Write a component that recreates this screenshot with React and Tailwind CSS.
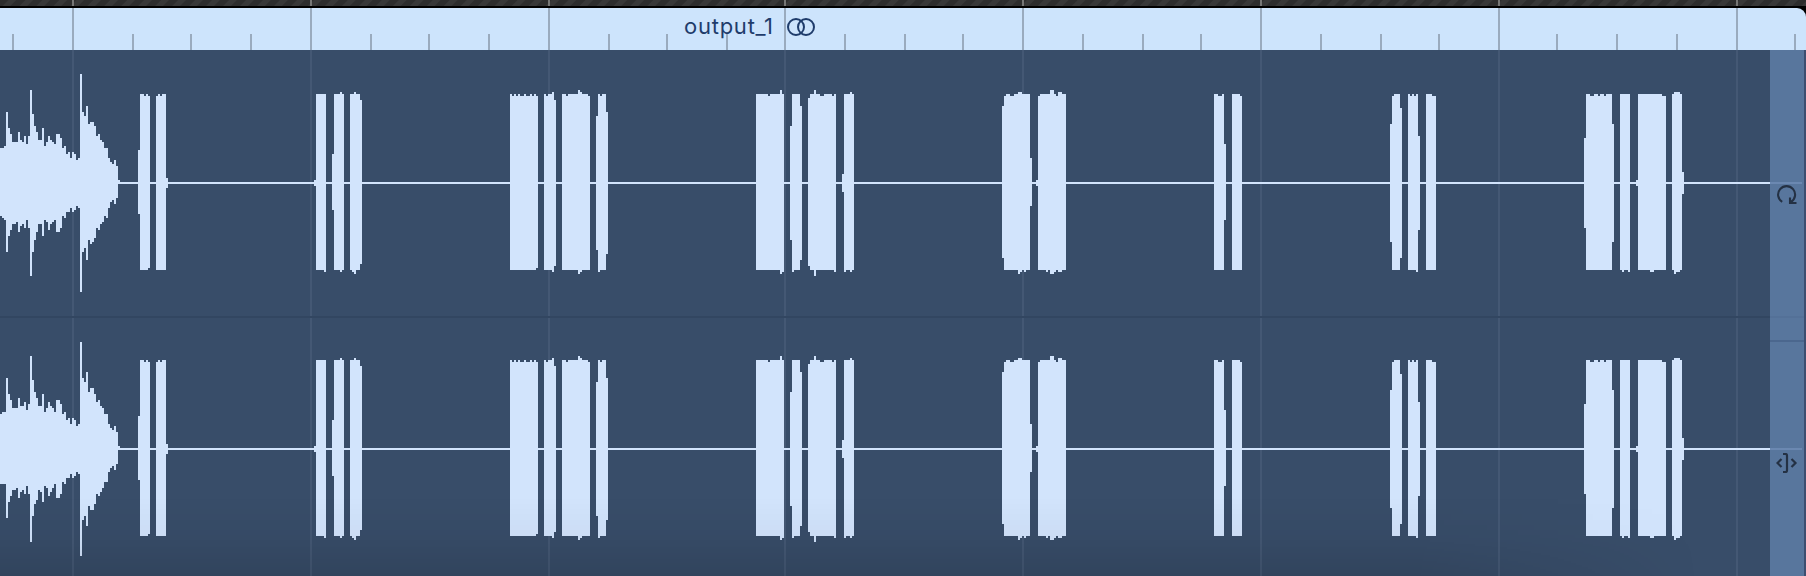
import React from 'react';

// All drawing data is expressed in 2px cells.
const NOISE_A_UP = [17,17,18,35,27,24,20,20,20,25,21,20,23,19,23,46,34,28,25,21,21,27,18,20,23,21,20,19,24,24,22,17,18,14,15,12,15,14,11,12,54,35,33,38,29,30,30,28,23,24,21,20,17,17,12,10,9,11,8,1];
const NOISE_A_DOWN = [17,18,19,35,27,24,21,21,20,25,22,21,23,19,23,47,35,29,25,21,21,27,19,20,24,21,20,19,25,25,23,17,18,15,15,13,15,14,12,13,55,35,33,39,29,31,30,28,23,24,21,20,17,18,13,10,9,11,8,1];
const NOISE_B_UP = [17,18,18,35,27,24,20,20,20,25,21,21,23,19,22,46,34,28,25,21,21,27,18,20,23,21,20,18,24,24,22,17,18,14,15,12,15,14,11,12,53,35,33,38,28,30,30,27,23,24,21,20,17,17,12,10,9,11,8,1];
const NOISE_B_DOWN = [18,18,18,35,27,24,21,21,20,25,22,21,23,19,23,47,34,28,26,21,22,27,19,20,24,22,20,18,25,25,23,17,18,15,15,13,15,14,12,13,54,36,34,39,29,31,31,28,23,24,22,20,17,17,12,10,9,11,8,1];

// [first cell, cell count, cells above centre, cells below centre]
const BURSTS = [
  [69,1,16,16],[70,2,44,44],[72,1,43,44],[73,1,44,44],[74,1,43,43],
  [78,1,43,44],[79,1,44,44],[80,1,43,44],[81,2,44,44],[83,1,2,3],
  [157,1,1,2],[158,4,44,44],[162,1,44,45],
  [166,1,14,14],[167,3,44,44],[170,1,45,45],[171,1,44,44],
  [175,1,44,44],[176,1,44,45],[177,1,45,46],[178,2,44,44],[180,1,41,41],
  [255,1,44,44],[256,1,43,44],[257,1,44,44],[258,1,43,44],[259,1,44,44],[260,2,43,44],[262,1,44,44],[263,2,43,44],[265,1,44,44],[266,1,43,44],[267,1,44,44],[268,1,43,43],
  [272,1,44,44],[273,1,43,44],[274,2,44,44],[276,1,45,45],[277,1,41,42],
  [281,2,44,44],[283,1,43,44],[284,5,44,44],[289,1,46,46],[290,1,45,45],[291,3,44,44],[294,1,43,44],
  [298,1,33,34],[299,1,44,45],[300,1,43,44],[301,2,44,44],[303,1,35,36],
  [378,6,44,44],[384,1,43,44],[385,5,44,44],[390,1,46,46],[391,1,44,45],
  [395,1,28,29],[396,1,44,45],[397,3,44,44],[400,1,38,39],
  [404,1,42,42],[405,2,44,44],[407,1,46,47],[408,2,44,44],[410,2,43,44],[412,4,44,44],[416,1,43,44],[417,1,44,45],
  [421,1,4,5],[422,1,44,45],[423,2,44,44],[425,1,45,45],[426,1,44,44],
  [501,1,38,38],[502,1,43,44],[503,2,44,44],[505,2,43,44],[507,2,44,44],[509,1,45,46],[510,1,45,45],[511,1,44,44],[512,1,44,45],[513,2,44,44],[515,1,12,12],
  [518,1,1,2],[519,1,43,44],[520,3,44,44],[523,1,44,45],[524,1,44,44],[525,2,46,46],[527,1,44,45],[528,1,43,44],[529,2,45,45],[531,2,44,44],
  [607,2,44,44],[609,2,43,44],[611,1,44,44],[612,1,19,19],[616,4,44,44],[620,1,43,44],
  [695,1,29,30],[696,1,43,44],[697,3,44,44],[700,1,37,38],
  [704,1,44,44],[705,1,43,44],[706,1,44,44],[707,1,43,44],[708,1,44,45],[709,1,23,24],
  [713,3,44,44],[716,2,43,44],
  [792,1,22,23],[793,2,44,44],[795,2,43,44],[797,2,44,44],[799,1,43,44],[800,2,44,44],[802,1,43,44],[803,3,44,44],[806,1,29,30],
  [810,1,44,44],[811,1,44,45],[812,2,44,44],[814,1,44,45],
  [818,1,1,2],[819,6,44,44],[825,2,44,45],[827,4,44,44],[831,2,43,44],
  [836,1,44,44],[837,1,45,46],[838,2,45,45],[840,1,44,44],[841,1,5,6],
];

const MAJOR = [36, 155, 274, 392, 511, 630, 749, 868];
const MINOR = [6, 66, 95, 125, 185, 214, 244, 304, 333, 363, 422, 452, 481, 541, 571, 600, 660, 690, 719, 778, 808, 838, 897];

function Waveform({ up, down }) {
  const column = (x, w, u, d) => `M${x} ${66 - u}h${w}V${66 + d}h${-w}z`;
  const d =
    up.map((u, i) => column(i, 1, u, down[i])).join('') +
    BURSTS.map(([x, w, u, b]) => column(x, w, u, b)).join('') +
    column(0, 885, 0, 1);
  return (
    <svg className="block h-[266px] w-[1770px]" viewBox="0 0 885 133" shapeRendering="crispEdges" aria-hidden="true">
      <path d={d} fill="#d2e4fc" />
    </svg>
  );
}

function Ruler() {
  return (
    <header className="relative h-[50px] w-full shrink-0 bg-black">
      <div className="h-1.5 bg-[repeating-linear-gradient(135deg,#2d2d2d_0px,#2d2d2d_5.5px,#383838_6.5px,#383838_11px,#2d2d2d_12px)]" />
      <div className="mt-0.5 h-[42px] rounded-tr-[9px] bg-[#cde4fc]" />
      <svg className="absolute inset-0 h-[50px] w-[1806px]" viewBox="0 0 903 25" shapeRendering="crispEdges" aria-hidden="true">
        {MAJOR.map((x) => (
          <g key={x}>
            <rect x={x} y="0" width="1" height="3" fill="#777776" />
            <rect x={x} y="4" width="1" height="21" fill="#9aabbe" />
          </g>
        ))}
        {MINOR.map((x) => (
          <rect key={x} x={x} y="17" width="1" height="8" fill="#9aabbe" />
        ))}
      </svg>
      <div className="absolute left-[684px] top-[13px] flex h-7 items-center gap-3.5 text-[#1f3c6b]">
        <span className="-mt-0.5 w-[88px] whitespace-nowrap font-['Inter',sans-serif] text-[22px] leading-7 tracking-[0.75px]">output_1</span>
        <svg className="h-5 w-[30px]" viewBox="0 0 30 20" fill="none" stroke="currentColor" strokeWidth="2" aria-hidden="true">
          <circle cx="10" cy="10" r="8" />
          <circle cx="20" cy="10" r="8" />
        </svg>
      </div>
    </header>
  );
}

function EdgeHandles() {
  return (
    <aside className="flex w-[34px] shrink-0 flex-col bg-[#58769d] text-[#243144]">
      <div className="flex h-[290px] flex-col pt-[132px]">
        <div className="h-0.5 w-8 bg-[#6b88b1]" />
        <svg className="ml-[7px] mt-px h-5 w-5" viewBox="0 0 20 20" fill="none" stroke="currentColor" strokeWidth="2.1" aria-hidden="true">
          <path d="M5.2 16.9A8.5 8.5 0 1 1 14 16.9" />
          <path d="M13 12.5V18H19.5" />
          <path d="M13 14.5L16.5 18H13z" fill="currentColor" stroke="none" />
        </svg>
        <div className="mt-[111px] h-0.5 bg-[#547198]" />
      </div>
      <div className="h-0.5 bg-[#4b678e]" />
      <div className="flex flex-1 flex-col pt-[106px]">
        <div className="h-0.5 w-8 bg-[#6b88b1]" />
        <svg className="ml-1.5 mt-[3px] h-5 w-[22px]" viewBox="0 0 22 20" fill="none" stroke="currentColor" strokeWidth="2.2" aria-hidden="true">
          <path d="M7 1H9.5Q11 1 11 2.5V17.5Q11 19 9.5 19H7" />
          <path d="M5.5 6L1.5 10L5.5 14" />
          <path d="M15.5 6L19.5 10L15.5 14" />
        </svg>
      </div>
    </aside>
  );
}

export default function App() {
  return (
    <div className="flex h-[576px] w-[1806px] flex-col overflow-hidden bg-[#3c4e70]">
      <Ruler />
      <div className="flex min-h-0 flex-1">
        <main className="relative w-[1770px] shrink-0 overflow-hidden bg-[#384d69]">
          <svg className="absolute inset-0 h-[526px] w-[1770px]" viewBox="0 0 885 263" shapeRendering="crispEdges" aria-hidden="true">
            {MAJOR.map((x) => (
              <rect key={x} x={x} y="0" width="1" height="263" fill="#445874" />
            ))}
            <rect x="0" y="133" width="885" height="1" fill="#324661" />
          </svg>
          <div className="relative flex flex-col">
            <Waveform up={NOISE_A_UP} down={NOISE_A_DOWN} />
            <Waveform up={NOISE_B_UP} down={NOISE_B_DOWN} />
          </div>
          <div className="absolute bottom-0 left-0 h-20 w-full bg-linear-to-b from-transparent via-black/[0.03] to-black/[0.11] [mask-image:linear-gradient(to_right,black_80%,transparent_96%)]" />
        </main>
        <EdgeHandles />
      </div>
    </div>
  );
}
